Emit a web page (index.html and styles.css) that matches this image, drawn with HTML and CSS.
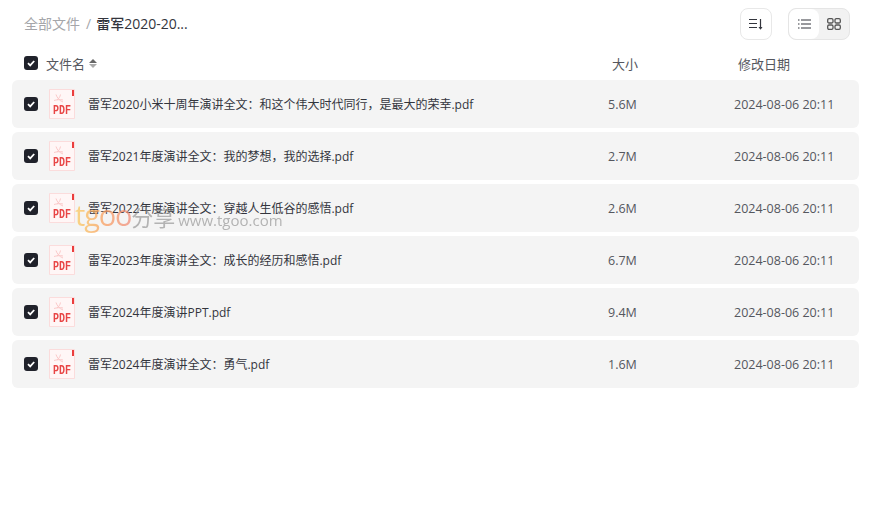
FILE: index.html
```html
<!DOCTYPE html>
<html lang="zh-CN">
<head>
    <meta charset="UTF-8">
    <title>全部文件</title>
    <link rel="stylesheet" href="styles.css">
</head>
<body>
<svg class="defs" width="0" height="0">
    <symbol id="pdf" viewBox="0 0 26 30">
        <path d="M.5 .5H25.500V29.500H.500Z" fill="#fff6f6" stroke="#fbdcdc"/>
        <path d="M23 1h2v6h-2Z" fill="#ea3d3d"/>
        <path d="M7 5.500c1 3 3 6 7 7.500M8 11c1.500-1 3-3 3.500-5.500M5 11.500c2-.5 6-1.500 9-.5" fill="none" stroke="#fbc9c9" stroke-width="1"/>
    </symbol>
    <symbol id="check" viewBox="0 0 14 14">
        <rect width="14" height="14" rx="3" fill="#20222b"/>
        <path d="M4 7.200l2.200 2.200L10.200 5" fill="none" stroke="#fff" stroke-width="1.800"/>
    </symbol>
</svg>

<div class="top">
    <div class="crumb">
        <span class="crumb-all">全部文件</span>
        <span class="crumb-sep">/</span>
        <span class="crumb-now">雷军2020-20...</span>
    </div>
    <div class="tools">
        <button class="btn-sort">
            <svg width="14" height="12" viewBox="0 0 14 12"><path d="M0 1.500h8M0 5.500h8M0 9.500h8M11.500 1v9.500" fill="none" stroke="#33353d" stroke-width="1.200"/><path d="M9.500 9h4l-2 2.800z" fill="#33353d"/></svg>
        </button>
        <div class="view">
            <span class="view-on">
                <svg width="13" height="10" viewBox="0 0 13 10"><path d="M3 1h10M3 5h10M3 9h10M0 1h1.500M0 5h1.500M0 9h1.500" fill="none" stroke="#33353d" stroke-width="1.200"/></svg>
            </span>
            <span class="view-off">
                <svg width="14" height="12" viewBox="0 0 14 12" fill="none" stroke="#555" stroke-width="1.300"><rect x=".7" y=".7" width="5.300" height="4.300" rx="1.300"/><rect x="8" y=".7" width="5.300" height="4.300" rx="1.300"/><rect x=".7" y="7" width="5.300" height="4.300" rx="1.300"/><rect x="8" y="7" width="5.300" height="4.300" rx="1.300"/></svg>
            </span>
        </div>
    </div>
</div>

<div class="head">
    <svg class="check" width="14" height="14"><use href="#check"/></svg>
    <span class="head-name">文件名<i class="sort"><b class="up"></b><b class="down"></b></i></span>
    <span class="head-size">大小</span>
    <span class="head-date">修改日期</span>
</div>

<div class="list">
    <div class="row">
        <svg class="check" width="14" height="14"><use href="#check"/></svg>
        <span class="icon"><svg width="26" height="30"><use href="#pdf"/></svg><em>PDF</em></span>
        <span class="name">雷军2020小米十周年演讲全文：和这个伟大时代同行，是最大的荣幸.pdf</span>
        <span class="size">5.6M</span>
        <span class="date">2024-08-06 20:11</span>
    </div>
    <div class="row">
        <svg class="check" width="14" height="14"><use href="#check"/></svg>
        <span class="icon"><svg width="26" height="30"><use href="#pdf"/></svg><em>PDF</em></span>
        <span class="name">雷军2021年度演讲全文：我的梦想，我的选择.pdf</span>
        <span class="size">2.7M</span>
        <span class="date">2024-08-06 20:11</span>
    </div>
    <div class="row">
        <svg class="check" width="14" height="14"><use href="#check"/></svg>
        <span class="icon"><svg width="26" height="30"><use href="#pdf"/></svg><em>PDF</em></span>
        <span class="name">雷军2022年度演讲全文：穿越人生低谷的感悟.pdf</span>
        <span class="size">2.6M</span>
        <span class="date">2024-08-06 20:11</span>
    </div>
    <div class="row">
        <svg class="check" width="14" height="14"><use href="#check"/></svg>
        <span class="icon"><svg width="26" height="30"><use href="#pdf"/></svg><em>PDF</em></span>
        <span class="name">雷军2023年度演讲全文：成长的经历和感悟.pdf</span>
        <span class="size">6.7M</span>
        <span class="date">2024-08-06 20:11</span>
    </div>
    <div class="row">
        <svg class="check" width="14" height="14"><use href="#check"/></svg>
        <span class="icon"><svg width="26" height="30"><use href="#pdf"/></svg><em>PDF</em></span>
        <span class="name">雷军2024年度演讲PPT.pdf</span>
        <span class="size">9.4M</span>
        <span class="date">2024-08-06 20:11</span>
    </div>
    <div class="row">
        <svg class="check" width="14" height="14"><use href="#check"/></svg>
        <span class="icon"><svg width="26" height="30"><use href="#pdf"/></svg><em>PDF</em></span>
        <span class="name">雷军2024年度演讲全文：勇气.pdf</span>
        <span class="size">1.6M</span>
        <span class="date">2024-08-06 20:11</span>
    </div>
</div>

<div class="mark"><span class="mark-logo">tgoo</span><span class="mark-cn">分享</span><span class="mark-url">www.tgoo.com</span></div>
</body>
</html>
```

FILE: styles.css
```css
html, body { margin: 0; height: 100%; overflow: hidden; }
body { background-color: #fff; color: #33353d; font-family: "Open Sans", "Noto Sans CJK SC", sans-serif; font-size: 13px; }
.defs { position: absolute; }

.top { display: flex; justify-content: space-between; align-items: center; height: 32px; padding: 8px 24px 0; }
.crumb { display: flex; align-items: center; font-size: 14px; margin-bottom: 2px; }
.crumb-all { color: #a5a6aa; }
.crumb-sep { color: #a5a6aa; margin: 0 5px 0 6px; }
.crumb-now { color: #33353d; font-weight: 500; }

.tools { display: flex; gap: 16px; }
.btn-sort { width: 32px; height: 32px; display: flex; align-items: center; justify-content: center; padding: 0; background: #fff; border: 1px solid #e8e8e8; border-radius: 8px; }
.view { display: flex; width: 62px; height: 32px; box-sizing: border-box; background: #f2f2f2; border: 1px solid #e5e5e5; border-radius: 8px; overflow: hidden; }
.view-on, .view-off { flex: 1; display: flex; align-items: center; justify-content: center; }
.view-on { background: #fff; border-radius: 8px; }

.head { display: flex; align-items: center; height: 34px; padding: 6px 24px 0; color: #55575e; }
.head-name { margin-left: 8px; display: flex; align-items: center; width: 566px; }
.head-size { width: 126px; }
.sort { display: inline-flex; flex-direction: column; gap: 1px; margin-left: 4px; }
.up { border: 4px solid transparent; border-top: 0; border-bottom: 4px solid #666; }
.down { border: 4px solid transparent; border-bottom: 0; border-top: 4px solid #aaa; }

.list { display: flex; flex-direction: column; gap: 4px; padding: 0 15px 0 12px; }
.row { display: flex; align-items: center; height: 48px; padding-left: 12px; background: #f4f4f4; border-radius: 6px; }
.check { flex: none; }
.icon { position: relative; width: 26px; height: 30px; margin-left: 11px; }
.icon svg { display: block; }
.icon em { position: absolute; left: 4px; top: 14px; color: #e84545; font: bold 10px/12px "Liberation Mono", monospace; transform: scaleY(1.350); transform-origin: top; }
.name { margin-left: 13px; width: 520px; font-size: 12px; margin-top: -1px; }
.size { width: 126px; font-size: 12.500px; color: #55575e; }
.date { font-size: 12.500px; color: #55575e; white-space: nowrap; }

.mark { position: absolute; left: 75px; top: 195px; display: flex; align-items: baseline; pointer-events: none; }
.mark-logo { font-size: 29px; letter-spacing: -1.200px; opacity: .75; background: linear-gradient(90deg, #fbcb5e, #f9a05f, #f08c7a); -webkit-background-clip: text; background-clip: text; color: transparent; }
.mark-cn { font-size: 22px; color: #888; opacity: .6; }
.mark-url { font-size: 15px; color: #888; margin-left: 3px; opacity: .6; }
```
